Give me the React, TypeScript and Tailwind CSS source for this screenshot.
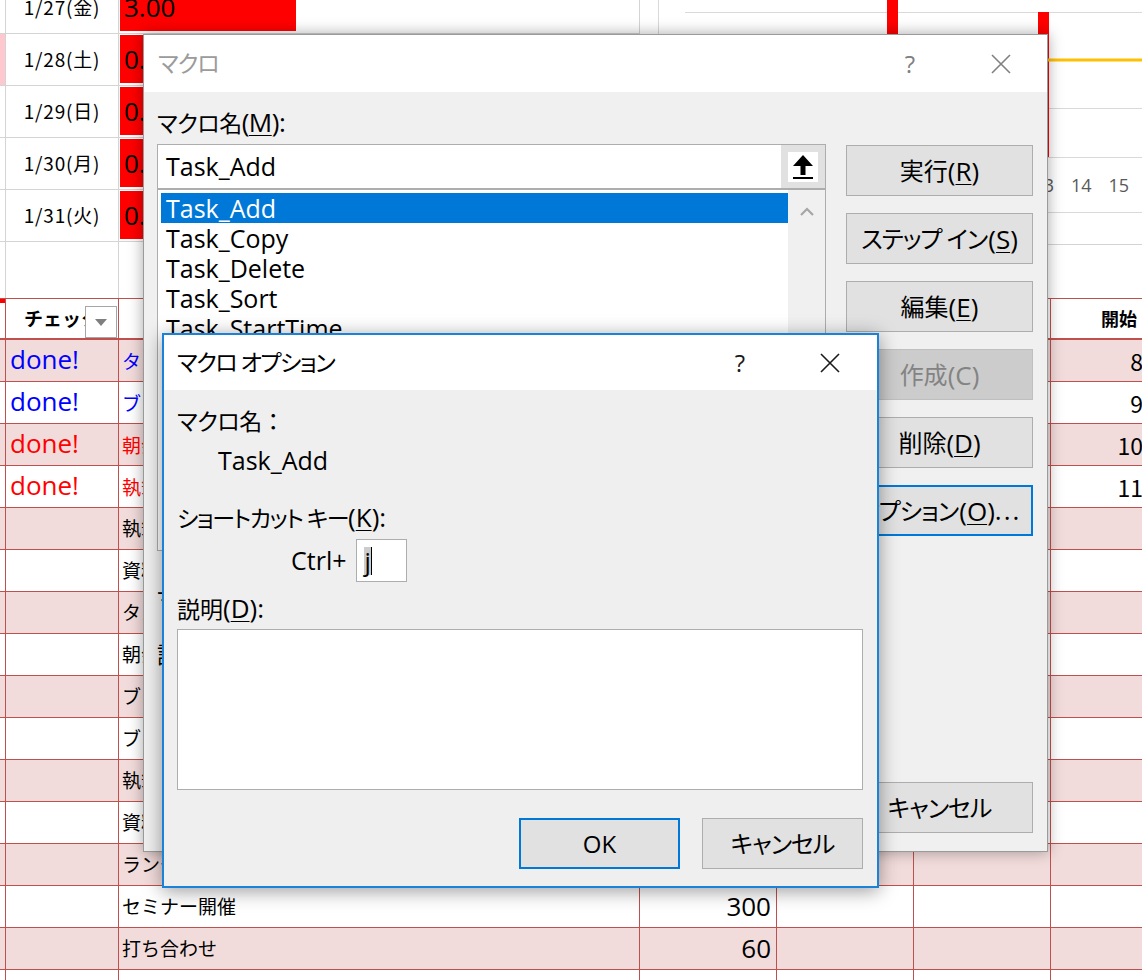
import React from "react";

// fonts: Latin from Open Sans, Japanese from Noto Sans CJK JP
const ui = "font-['Open_Sans','Noto_Sans_CJK_JP',sans-serif] [font-feature-settings:'palt']";
const jp = "font-['Noto_Sans_CJK_JP','Open_Sans',sans-serif]";
const latin = "font-['Open_Sans','Noto_Sans',sans-serif]";

const days = [
  { label: "1/27(金)", value: "3.00", width: 176, mark: "" },
  { label: "1/28(土)", value: "0.50", width: 30, mark: "bg-[#ffc7ce]" },
  { label: "1/29(日)", value: "0.75", width: 44, mark: "" },
  { label: "1/30(月)", value: "0.50", width: 30, mark: "" },
  { label: "1/31(火)", value: "0.50", width: 30, mark: "" },
];

const tasks = [
  { done: "text-[#0000ff]", name: "タスク管理表の作成", plan: "30", start: "8:00" },
  { done: "text-[#0000ff]", name: "ブログ記事の下書き", plan: "60", start: "9:00" },
  { done: "text-[#ff0000]", name: "朝会", plan: "60", start: "10:00" },
  { done: "text-[#ff0000]", name: "執筆（第1章）", plan: "60", start: "11:00" },
  { done: "", name: "執筆（第2章）", plan: "120", start: "" },
  { done: "", name: "資料作成", plan: "90", start: "" },
  { done: "", name: "タスク見直し", plan: "30", start: "" },
  { done: "", name: "朝会 議事録", plan: "30", start: "" },
  { done: "", name: "ブログ記事作成", plan: "60", start: "" },
  { done: "", name: "ブログ更新", plan: "30", start: "" },
  { done: "", name: "執筆（第3章）", plan: "120", start: "" },
  { done: "", name: "資料作成", plan: "60", start: "" },
  { done: "", name: "ランチ", plan: "60", start: "" },
  { done: "", name: "セミナー開催", plan: "300", start: "" },
  { done: "", name: "打ち合わせ", plan: "60", start: "" },
  { done: "", name: "資料整理", plan: "100", start: "" },
];

const macros = ["Task_Add", "Task_Copy", "Task_Delete", "Task_Sort", "Task_StartTime", "Task_EndTime", "Task_Clear"];

// access key in parentheses, Latin drawn a bit larger like Segoe UI
function Key({ k, colon = false, plain = false }: { k: string; colon?: boolean; plain?: boolean }) {
  return (
    <span className={`text-[26px] leading-none ${latin}`}>
      (
      {plain ? k : <span className="underline underline-offset-[3px] decoration-1">{k}</span>})
      {colon ? ":" : ""}
    </span>
  );
}

function CloseIcon({ color }: { color: string }) {
  return (
    <svg width="20" height="20" viewBox="0 0 20 20" className="block">
      <path d="M1 1L19 19M19 1L1 19" stroke={color} strokeWidth="1.6" fill="none" />
    </svg>
  );
}

function Chart() {
  return (
    <svg width="502" height="316" viewBox="640 -18 502 316" className="block">
      <rect x="640" y="-18" width="502" height="316" fill="#fff" />
      <line x1="658.5" y1="-18" x2="658.5" y2="230" stroke="#d9d9d9" />
      <line x1="685" y1="12.5" x2="1142" y2="12.5" stroke="#d9d9d9" />
      <line x1="685" y1="108.5" x2="1142" y2="108.5" stroke="#d9d9d9" />
      <line x1="685" y1="157.5" x2="1142" y2="157.5" stroke="#d9d9d9" />
      <line x1="658" y1="212.5" x2="1142" y2="212.5" stroke="#d9d9d9" />
      <rect x="887" y="-18" width="11" height="52" fill="#ff0000" />
      <rect x="1038" y="12" width="11" height="145" fill="#ff0000" />
      <line x1="1040" y1="60" x2="1142" y2="60" stroke="#ffc000" strokeWidth="3" />
      {["12", "13", "14", "15", "16"].map((n, i) => (
        <text key={n} x={996 + i * 37.5} y="192" fontSize="18" fill="#595959" fontFamily="Open Sans">
          {n}
        </text>
      ))}
      <line x1="640" y1="244.5" x2="1142" y2="244.5" stroke="#d4d4d4" />
    </svg>
  );
}

function Sheet() {
  return (
    <div className="flex flex-col">
      {/* date rows + chart */}
      <div className="flex -mt-[18px]">
        <div className="w-[640px] flex flex-col">
          {days.map((d) => (
            <div key={d.label} className="h-[52px] flex border-b border-[#d4d4d4]">
              <div className={`w-[6px] border-r border-[#d4d4d4] ${d.mark}`} />
              <div className={`w-[113px] border-r border-[#d4d4d4] flex items-center justify-center text-[19px] tracking-[0.8px] ${jp}`}>
                {d.label}
              </div>
              <div className="flex-1 pt-[1px] pb-[2px] pl-[1px] border-r border-[#d4d4d4]">
                <div
                  className={`h-full bg-[#ff0000] flex items-center pl-[4px] text-[26px] whitespace-nowrap ${latin}`}
                  style={{ width: d.width }}
                >
                  {d.value}
                </div>
              </div>
            </div>
          ))}
          <div className="h-[56px] flex">
            <div className="w-[6px] border-r border-[#d4d4d4]" />
            <div className="w-[113px] border-r border-[#d4d4d4]" />
            <div className="flex-1 border-r border-[#d4d4d4]" />
          </div>
        </div>
        <Chart />
      </div>

      {/* task table */}
      <div className="w-[1188px] border-t border-[#c0504d]">
        <div className="grid grid-cols-[6px_113px_521px_137px_137px_137px_137px] h-[41px] border-b-2 border-[#c0504d] font-bold text-[18px]">
          <div className="relative border-r border-[#c0504d]">
            <div className="absolute left-0 top-0 w-[5px] h-[4px] bg-[#ff0000]" />
          </div>
          <div className={`relative border-r border-[#c0504d] flex items-center justify-center text-[19px] ${jp}`}>
            チェック
            <div className="absolute right-[1px] bottom-0 w-[32px] h-[32px] bg-white border border-[#a6a6a6] flex items-center justify-center">
              <svg width="12" height="7" viewBox="0 0 12 7">
                <path d="M0 0H12L6 7Z" fill="#7f7f7f" />
              </svg>
            </div>
          </div>
          <div className={`border-r border-[#c0504d] flex items-center justify-center ${jp}`}>タスク</div>
          <div className={`border-r border-[#c0504d] flex items-center justify-center ${jp}`}>予定(分)</div>
          <div className={`border-r border-[#c0504d] flex items-center justify-center ${jp}`}>実績(分)</div>
          <div className={`border-r border-[#c0504d] flex items-center justify-center ${jp}`}>差異</div>
          <div className={`border-r border-[#c0504d] flex items-center justify-center ${jp}`}>開始</div>
        </div>
        {tasks.map((t, i) => (
          <div
            key={i}
            className={`grid grid-cols-[6px_113px_521px_137px_137px_137px_137px] h-[42px] border-b border-[#c0504d] ${
              i % 2 === 0 ? "bg-[#f2dcdb]" : "bg-white"
            }`}
          >
            <div className="border-r border-[#c0504d]" />
            <div className={`border-r border-[#c0504d] flex items-center pl-[4px] pb-[3px] text-[26px] ${latin} ${t.done}`}>
              {t.done ? "done!" : ""}
            </div>
            <div className={`border-r border-[#c0504d] flex items-center pl-[3px] text-[19px] whitespace-nowrap ${jp} ${t.done}`}>
              {t.name}
            </div>
            <div className={`border-r border-[#c0504d] flex items-center justify-end pr-[5px] text-[26px] ${latin}`}>
              {t.plan}
            </div>
            <div className="border-r border-[#c0504d]" />
            <div className="border-r border-[#c0504d]" />
            <div className={`border-r border-[#c0504d] flex items-center justify-end pr-[12px] text-[23px] ${jp}`}>
              {t.start}
            </div>
          </div>
        ))}
      </div>
    </div>
  );
}

function Btn({ children, className = "" }: { children: React.ReactNode; className?: string }) {
  return (
    <div className={`h-[51px] flex items-center justify-center text-[24px] whitespace-nowrap ${className}`}>
      {children}
    </div>
  );
}

function MacroDialog() {
  const normal = "border border-[#adadad] bg-[#e1e1e1]";
  return (
    <div className={`absolute left-[143px] top-[34px] w-[905px] h-[818px] flex flex-col bg-[#f0f0f0] border border-[#9a9a9a] shadow-[0_0_14px_rgba(0,0,0,0.35)] ${ui}`}>
      <div className="h-[57px] bg-white flex items-center pl-[14px] text-[23px] text-[#9b9b9b]">
        <span className="flex-1 tracking-[-1px]">マクロ</span>
        <span className={`w-[20px] text-center text-[24px] text-[#808080] ${latin}`}>?</span>
        <span className="ml-[71px] mr-[36px]">
          <CloseIcon color="#808080" />
        </span>
      </div>
      <div className="flex flex-1 pl-[13px] pr-[14px]">
        <div className="w-[669px] flex flex-col">
          <div className="mt-[17px] h-[27px] leading-[27px] text-[23px] tracking-[-0.5px]">
            マクロ名<Key k="M" colon />
          </div>
          <div className="mt-[8px] h-[45px] border border-[#adadad] bg-white flex items-center">
            <div className={`flex-1 pl-[8px] text-[25px] ${latin}`}>Task_Add</div>
            <div className="w-[44px] h-[43px] bg-[#e1e1e1] flex items-center justify-center">
              <div className="w-[30px] h-[30px] bg-white flex items-center justify-center">
                <svg width="22" height="26" viewBox="0 0 22 26">
                  <path d="M11 1L1 12H8.5V21H13.5V12H21Z" fill="#000" />
                  <rect x="1" y="23" width="20" height="2" fill="#000" />
                </svg>
              </div>
            </div>
          </div>
          <div className="h-[362px] border border-[#adadad] bg-white flex">
            <div className="flex-1 pt-[3px] pl-[3px] overflow-hidden">
              {macros.map((m, i) => (
                <div
                  key={m}
                  className={`h-[30px] leading-[30px] pl-[5px] text-[25px] ${latin} ${
                    i === 0 ? "bg-[#0078d7] text-white" : "text-black"
                  }`}
                >
                  {m}
                </div>
              ))}
            </div>
            <div className="w-[37px] bg-[#f0f0f0] flex justify-center pt-[17px]">
              <svg width="14" height="9" viewBox="0 0 14 9">
                <path d="M1 8L7 2L13 8" stroke="#a6a6a6" strokeWidth="2.2" fill="none" />
              </svg>
            </div>
          </div>
          <div className="mt-[28px] h-[40px] flex items-center text-[23px]">
            <span>
              マクロの保存先<Key k="A" colon />
            </span>
            <div className="ml-[24px] w-[420px] h-[40px] border border-[#adadad] bg-white flex items-center pl-[6px]">
              開いているすべてのブック
            </div>
          </div>
          <div className="mt-[22px] h-[27px] leading-[27px] text-[23px]">説明</div>
          <div className="mt-[6px] h-[90px] pl-[40px] text-[23px]">タスクを追加します。</div>
        </div>
        <div className="ml-[20px] w-[187px] flex flex-col pt-[53px] pb-[18px]">
          <Btn className={normal}>
            実行<Key k="R" />
          </Btn>
          <Btn className={`mt-[17px] ${normal}`}>
            <span className="tracking-[-1px] mr-[1px]">ステップ イン</span>
            <Key k="S" />
          </Btn>
          <Btn className={`mt-[17px] ${normal}`}>
            編集<Key k="E" />
          </Btn>
          <Btn className="mt-[17px] border border-[#bfbfbf] bg-[#cccccc] text-[#838383]">
            作成<Key k="C" plain />
          </Btn>
          <Btn className={`mt-[17px] ${normal}`}>
            削除<Key k="D" />
          </Btn>
          <Btn className="mt-[17px] border-2 border-[#0078d7] bg-[#e1e1e1]">
            <span className="tracking-[-1px] mr-[1px]">オプション</span>
            <Key k="O" />
            <span className={`text-[26px] tracking-[2px] ${latin}`}>...</span>
          </Btn>
          <Btn className={`mt-auto tracking-[-1px] ${normal}`}>キャンセル</Btn>
        </div>
      </div>
    </div>
  );
}

function OptionsDialog() {
  return (
    <div className={`absolute left-[162px] top-[333px] w-[717px] h-[555px] flex flex-col bg-[#efefef] border-2 border-[#1a82d8] shadow-[0_3px_18px_rgba(0,0,0,0.4)] ${ui}`}>
      <div className="h-[55px] bg-white flex items-center pl-[13px] text-[23px]">
        <span className="flex-1 tracking-[-1.5px]">マクロ オプション</span>
        <span className={`w-[20px] text-center text-[24px] text-[#1a1a1a] ${latin}`}>?</span>
        <span className="ml-[70px] mr-[37px]">
          <CloseIcon color="#1a1a1a" />
        </span>
      </div>
      <div className="flex flex-col pl-[13px] pr-[14px] text-[23px]">
        <div className="mt-[18px] h-[27px] leading-[27px] tracking-[-0.5px]">
          マクロ名<span className="[font-feature-settings:normal]">：</span>
        </div>
        <div className={`mt-[12px] h-[27px] leading-[27px] pl-[41px] text-[25px] ${latin}`}>Task_Add</div>
        <div className="mt-[30px] h-[27px] leading-[27px]">
          <span className="tracking-[-1.5px]">ショートカット キー</span>
          <Key k="K" colon />
        </div>
        <div className="mt-[8px] h-[43px] flex items-center pl-[114px]">
          <span className={`text-[25px] ${latin}`}>Ctrl+</span>
          <div className="ml-[10px] w-[51px] h-[43px] border border-[#adadad] bg-white flex items-center pl-[7px]">
            <span className={`bg-[#cccccc] text-[25px] leading-[28px] ${latin}`}>j</span>
            <span className="w-[1px] h-[28px] bg-black" />
          </div>
        </div>
        <div className="mt-[13px] h-[27px] leading-[27px]">
          説明<Key k="D" colon />
        </div>
        <div className="mt-[7px] h-[161px] border border-[#adadad] bg-white" />
        <div className="mt-[28px] flex justify-end gap-[22px]">
          <Btn className={`w-[161px] border-2 border-[#0078d7] bg-[#e1e1e1] text-[23px] ${latin}`}>OK</Btn>
          <Btn className="w-[161px] border border-[#adadad] bg-[#e1e1e1] tracking-[-1px]">キャンセル</Btn>
        </div>
      </div>
    </div>
  );
}

export default function App() {
  return (
    <div className="relative w-[1142px] h-[980px] overflow-hidden bg-white text-black">
      <Sheet />
      <MacroDialog />
      <OptionsDialog />
    </div>
  );
}
